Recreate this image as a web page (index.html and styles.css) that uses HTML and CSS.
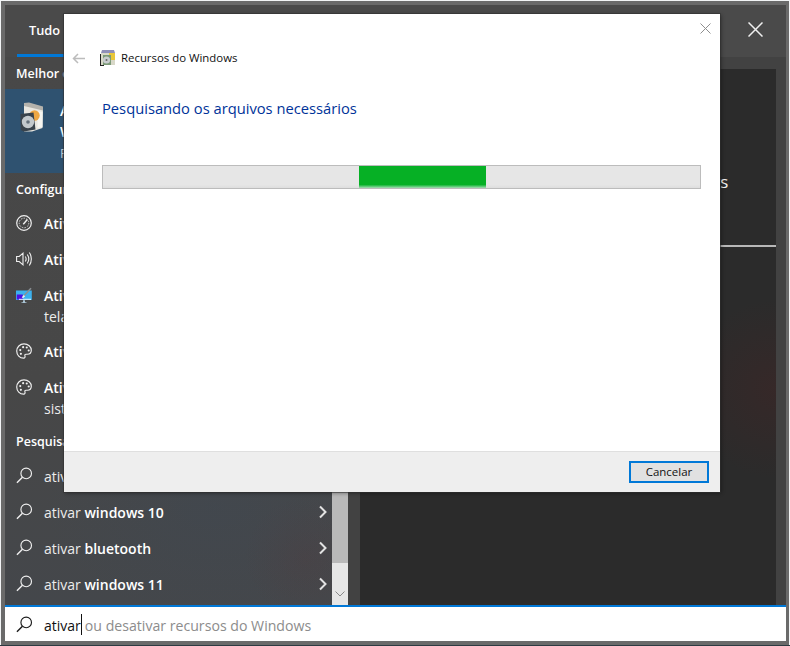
FILE: index.html
```html
<!DOCTYPE html>
<html lang="pt-BR">
<head>
<meta charset="utf-8">
<title>Recursos do Windows</title>
<link rel="stylesheet" href="styles.css">
</head>
<body>
<svg class="defs" width="0" height="0" aria-hidden="true">
  <symbol id="i-search" viewBox="0 0 18 18">
    <circle cx="10.8" cy="6.8" r="5.6" fill="none" stroke="currentColor" stroke-width="1.2"/>
    <path d="M6.8 10.8 1 16.6" fill="none" stroke="currentColor" stroke-width="1.5"/>
  </symbol>
  <symbol id="i-palette" viewBox="0 0 18 18">
    <path d="M9 1c4.600 0 8.200 3.100 8.200 7.200 0 2.800-2.100 4.500-4.500 4.500h-1.500c-1 0-1.500.6-1.200 1.500.4 1 .3 2.900-1.500 2.900C4.200 17.100.8 13.500.8 9.100.8 4.600 4.400 1 9 1Z" fill="none" stroke="currentColor" stroke-width="1.300"/>
    <circle cx="4.800" cy="8" r="1.200" fill="currentColor"/><circle cx="8" cy="4.700" r="1.200" fill="currentColor"/>
    <circle cx="12.100" cy="5" r="1.200" fill="currentColor"/><circle cx="14.300" cy="8.500" r="1.200" fill="currentColor"/>
    <circle cx="5.500" cy="12.200" r="1.200" fill="currentColor"/>
  </symbol>
  <symbol id="i-chev" viewBox="0 0 10 14">
    <path d="M2 1.500 7.500 7 2 12.500" fill="none" stroke="currentColor" stroke-width="2"/>
  </symbol>
  <symbol id="i-box" viewBox="0 0 24 30">
    <path d="M4 2 23 6.500 22.500 26 12 29.500H4Z" fill="#e9e7e0"/>
    <path d="M4 1 9 .6 23 4.500 23 8.500 4 4Z" fill="#b4b2ac"/>
    <path d="M17.500 26V9l5 1v15Z" fill="#f6f5f0"/>
    <circle cx="14.500" cy="13.500" r="5.200" fill="#eda743"/>
    <path d="M.5 12 13.500 10.500 15.500 27.500 4 29.500.8 28Z" fill="#39434b"/>
    <circle cx="8" cy="20" r="6.200" fill="#c3c9cc"/>
    <circle cx="8" cy="20" r="1.800" fill="#64707a"/>
  </symbol>
</svg>

<div class="frame">
  <div class="panel">
    <header class="topbar">
      <nav class="tabs">
        <span class="tab tab-active">Tudo</span>
        <span class="tab">Aplicativos</span>
        <span class="tab">Documentos</span>
        <span class="tab">Web</span>
        <span class="tab">Mais</span>
      </nav>
      <span class="dots">···</span>
      <svg class="top-close" viewBox="0 0 15 15"><path d="M.5.500l14 14M14.500.500l-14 14" fill="none" stroke="currentColor" stroke-width="1.500"/></svg>
    </header>

    <div class="main">
      <section class="results">
        <div class="list">
          <h2 class="group">Melhor correspondência</h2>
          <div class="best">
            <svg class="best-icon"><use href="#i-box"/></svg>
            <div class="best-text">
              <b>Ativar ou desativar recursos do</b>
              <b>Windows</b>
              <span class="best-sub">Painel de Controle</span>
            </div>
          </div>

          <h2 class="group">Configurações</h2>
          <div class="row">
            <svg class="ico" viewBox="0 0 16 16"><circle cx="8" cy="8" r="7.300" fill="none" stroke="currentColor" stroke-width="1.200"/><circle cx="8" cy="8" r="4.800" fill="none" stroke="currentColor" stroke-width=".8" stroke-dasharray="1.500 1.200"/><path d="M7.300 9.300 11.300 4.500" stroke="currentColor" stroke-width="1.400"/></svg>
            <div class="row-text"><b>Ativar ou desativar o modo de jogo</b></div>
          </div>
          <div class="row">
            <svg class="ico" viewBox="0 0 16 16"><path d="M.6 5.500h2.600L7 2.200v11.600L3.200 10.500H.6Z" fill="none" stroke="currentColor" stroke-width="1.100"/><path d="M9.300 5.500c1 1.500 1 3.500 0 5M11.300 3.500c1.800 2.700 1.800 6.300 0 9M13.300 1.500c2.700 3.800 2.700 9.200 0 13" fill="none" stroke="currentColor" stroke-width="1.100"/></svg>
            <div class="row-text"><b>Ativar ou desativar o som mono</b></div>
          </div>
          <div class="row row-tall">
            <svg class="ico" viewBox="0 0 16 16"><path d="M0 3.500h15.800v9.500H0Z" fill="#3cb1ee"/><path d="M.8 7.500h6v5h-6Z" fill="#4c10e2"/><path d="M3 11.800h12v1H3Z" fill="#e8f4fb"/><path d="M5.500 16h5v-.8H9v-2H7v2H5.500Z" fill="#a9c4d4"/><path d="M7 9.800 15 1.200" stroke="#8a8f94" stroke-width="1.600"/><path d="M5.700 10.500l2-2.500 1.500 1.300-2 1.700Z" fill="#f2f2f2"/></svg>
            <div class="row-text"><b>Ativar ou desativar o ajuste automático de</b><span>tela</span></div>
          </div>
          <div class="row">
            <svg class="ico"><use href="#i-palette"/></svg>
            <div class="row-text"><b>Ativar ou desativar as cores de destaque</b></div>
          </div>
          <div class="row row-tall">
            <svg class="ico"><use href="#i-palette"/></svg>
            <div class="row-text"><b>Ativar ou desativar o tema escuro do</b><span>sistema</span></div>
          </div>

          <h2 class="group">Pesquisar na Web</h2>
          <div class="row row-web">
            <svg class="ico"><use href="#i-search"/></svg>
            <div class="row-text web-text">ativar <b>windows</b></div>
            <svg class="chev"><use href="#i-chev"/></svg>
          </div>
          <div class="row row-web">
            <svg class="ico"><use href="#i-search"/></svg>
            <div class="row-text web-text">ativar <b>windows 10</b></div>
            <svg class="chev"><use href="#i-chev"/></svg>
          </div>
          <div class="row row-web">
            <svg class="ico"><use href="#i-search"/></svg>
            <div class="row-text web-text">ativar <b>bluetooth</b></div>
            <svg class="chev"><use href="#i-chev"/></svg>
          </div>
          <div class="row row-web">
            <svg class="ico"><use href="#i-search"/></svg>
            <div class="row-text web-text">ativar <b>windows 11</b></div>
            <svg class="chev"><use href="#i-chev"/></svg>
          </div>
        </div>
        <div class="scrollbar">
          <div class="thumb"></div>
          <svg class="scroll-down" viewBox="0 0 10 6"><path d="M.5.500 5 5 9.500.500" fill="none" stroke="currentColor" stroke-width="1"/></svg>
        </div>
      </section>

      <section class="detail">
        <h1 class="detail-title">Ativar ou desativar recursos do Windows</h1>
        <p class="detail-sub">Painel de Controle</p>
        <div class="detail-rule"></div>
      </section>
    </div>

    <div class="searchbox">
      <svg class="ico ico-dark"><use href="#i-search"/></svg>
      <div class="query"><span class="typed">ativar</span><span class="caret"></span><span class="hint">ou desativar recursos do Windows</span></div>
    </div>
  </div>
</div>

<div class="dialog">
  <svg class="dialog-close" viewBox="0 0 11 11"><path d="M.5.500l10 10M10.500.500l-10 10" fill="none" stroke="currentColor" stroke-width="1"/></svg>
  <div class="dialog-head">
    <svg class="back" viewBox="0 0 13 11"><path d="M13 5.500H1.500M6 1 1.500 5.500 6 10" fill="none" stroke="currentColor" stroke-width="1.500"/></svg>
    <svg class="dialog-icon" viewBox="0 0 16 16"><path d="M2 0h12l1 3H1Z" fill="#8f8fb8"/><path d="M1 3h14v12H1Z" fill="#d8d8c8"/><path d="M9 3h6v7H9Z" fill="#e8c63a"/><path d="M3 5h8v10H3Z" fill="#7c9a78"/><circle cx="6.500" cy="10" r="3.600" fill="#c9cdcf"/><circle cx="6.500" cy="10" r="1" fill="#666"/><path d="M0 4h1v12H0ZM0 15h4v1H0Z" fill="#222"/></svg>
    <span class="dialog-name">Recursos do Windows</span>
  </div>
  <div class="dialog-body">
    <h2 class="dialog-title">Pesquisando os arquivos necessários</h2>
    <div class="progress"><div class="progress-fill"></div></div>
  </div>
  <div class="dialog-foot">
    <button class="btn" type="button">Cancelar</button>
  </div>
</div>
</body>
</html>
```

FILE: styles.css
```css
* { box-sizing: border-box; }

html, body {
  margin: 0;
  padding: 0;
}

body {
  position: relative;
  width: 790px;
  height: 646px;
  overflow: hidden;
  background: #f2f4f5;
  border-bottom: 1px solid #2d3b42;
  font-family: "Open Sans", "Noto Sans", sans-serif;
}

.defs { position: absolute; }

.frame {
  height: 644px;
  margin: 1px 1px 0 1px;
  padding: 4px 3px 4px 4px;
  background: #6a6a6a;
}

.panel {
  height: 636px;
  display: flex;
  flex-direction: column;
  background: #424242;
  color: #fff;
  overflow: hidden;
}

.topbar {
  height: 52px;
  flex: none;
  display: flex;
  align-items: center;
  background: #4a4a4a;
  padding-right: 23px;
}

.tabs {
  display: flex;
  height: 100%;
  margin-left: 12px;
  flex: 1;
}

.tab {
  padding-top: 15px;
  margin-right: 20px;
  font-size: 12.800px;
  font-weight: 600;
  line-height: 20px;
  white-space: nowrap;
}

.tab-active {
  width: 47px;
  padding-left: 12px;
  border-bottom: 3px solid #0078d7;
}

.dots {
  font-size: 16px;
  color: #ddd;
  margin-right: 27px;
  margin-top: -4px;
  width: 14px;
}

.top-close {
  width: 15px;
  height: 15px;
  color: #f0f0f0;
  margin-top: -4px;
}

.main {
  flex: 1;
  min-height: 0;
  display: flex;
  background: #424242;
}

.results {
  width: 343px;
  flex: none;
  display: flex;
  background:
    radial-gradient(ellipse 170px 110px at 210px 450px, rgba(58, 72, 88, .3), transparent),
    radial-gradient(ellipse 60px 60px at 300px 500px, rgba(80, 60, 62, .35), transparent),
    linear-gradient(#484848, #474747 60%, #44474b);
}

.list {
  flex: 1;
  min-width: 0;
  overflow: hidden;
}

.group {
  height: 32px;
  margin: 0;
  padding-left: 11px;
  font-size: 12.500px;
  font-weight: 600;
  line-height: 34px;
  white-space: nowrap;
  color: #fff;
}

.best {
  height: 84px;
  display: flex;
  background: #2f5270;
}

.best-icon {
  width: 24px;
  height: 30px;
  margin: 13px 0 0 15px;
  flex: none;
}

.best-text {
  display: flex;
  flex-direction: column;
  margin-left: 16px;
  padding-top: 11px;
  font-size: 14px;
  line-height: 21px;
  white-space: nowrap;
}

.best-text b { font-weight: 600; }

.best-sub {
  margin-top: 1px;
  font-size: 12.500px;
  color: #c8d0d8;
}

.row {
  height: 36px;
  display: flex;
  align-items: flex-start;
  padding-left: 11px;
}

.row-tall { height: 56px; }

.ico {
  width: 16px;
  height: 16px;
  margin-top: 10px;
  flex: none;
  color: #f0f0f0;
}

.row-text {
  margin-left: 12px;
  display: flex;
  flex-direction: column;
  font-size: 14px;
  line-height: 21px;
  padding-top: 8px;
  white-space: nowrap;
  color: #ececec;
  min-width: 0;
}

.row-text b { font-weight: 600; color: #fff; }

.web-text {
  display: block;
  flex: 1;
  padding-top: 9px;
}

.row-web .ico { width: 17px; height: 17px; margin-top: 10px; }
.row-web .row-text { margin-left: 11px; }

.chev {
  width: 10px;
  height: 14px;
  margin: 12px 4px 0 0;
  flex: none;
  color: #e2e2e2;
}

.scrollbar {
  width: 16px;
  flex: none;
  display: flex;
  flex-direction: column;
  background: #e6e6e6;
}

.thumb {
  height: 506px;
  flex: none;
  background: #b9b9b9;
}

.scroll-down {
  width: 10px;
  height: 6px;
  margin: 28px auto 0;
  color: #8a8a8a;
}

.detail {
  flex: none;
  width: 416px;
  height: 536px;
  margin: 12px 0 0 12px;
  padding-top: 100px;
  background:
    radial-gradient(ellipse 90px 90px at 415px 320px, rgba(70, 36, 36, .4), transparent),
    #2b2b2b;
  overflow: hidden;
}

.detail-title {
  margin: 0;
  text-align: center;
  font-size: 16.900px;
  font-weight: 400;
  line-height: 26px;
  color: #f2f2f2;
  white-space: nowrap;
}

.detail-sub {
  margin: 4px 0 0;
  text-align: center;
  font-size: 12.500px;
  line-height: 18px;
  color: #ccc;
}

.detail-rule {
  height: 2px;
  margin-top: 28px;
  background: #b8b8b8;
}

.searchbox {
  height: 36px;
  flex: none;
  display: flex;
  align-items: flex-start;
  padding-left: 11px;
  background: #fff;
  border-top: 2px solid #0078d7;
}

.ico-dark {
  width: 17px;
  height: 17px;
  margin-top: 9px;
  color: #1a1a1a;
}

.query {
  display: flex;
  align-items: flex-start;
  margin-left: 11px;
  font-size: 14px;
  line-height: 21px;
  padding-top: 8px;
  white-space: nowrap;
}

.typed { color: #111; }

.caret {
  width: 1px;
  height: 21px;
  margin: -1px 3px 0 0;
  background: #111;
}

.hint {
  font-size: 14.130px;
  color: #8c8c8c;
}

.dialog {
  position: absolute;
  left: 64px;
  top: 14px;
  width: 656px;
  height: 478px;
  display: flex;
  flex-direction: column;
  background: #fff;
  box-shadow: 0 0 0 1px rgba(50, 50, 50, .55), 1px 1px 4px rgba(0, 0, 0, .45);
  color: #000;
}

.dialog-close {
  position: absolute;
  right: 9px;
  top: 9px;
  width: 11px;
  height: 11px;
  color: #8e8e8e;
}

.dialog-head {
  height: 52px;
  flex: none;
  display: flex;
  align-items: center;
  padding-top: 36px;
}

.back {
  width: 13px;
  height: 11px;
  margin-left: 8px;
  color: #bcbcbc;
}

.dialog-icon {
  width: 16px;
  height: 16px;
  margin-left: 15px;
}

.dialog-name {
  margin-left: 5px;
  font-size: 11.400px;
  line-height: 16px;
  color: #111;
}

.dialog-body {
  flex: 1;
  padding: 31px 19px 0 38px;
}

.dialog-title {
  margin: 0;
  font-size: 14.730px;
  font-weight: 400;
  line-height: 22px;
  color: #003399;
}

.progress {
  height: 24px;
  margin-top: 46px;
  border: 1px solid #bcbcbc;
  background: linear-gradient(#e6e6e6 85%, #dedede);
  padding-left: 256px;
}

.progress-fill {
  width: 127px;
  height: 100%;
  background: linear-gradient(#06b025 84%, #3ac058 90%, #a6dcb4);
}

.dialog-foot {
  height: 41px;
  flex: none;
  display: flex;
  justify-content: flex-end;
  padding: 9px 11px 0 0;
  background: #eeeeee;
  border-top: 1px solid #dfdfdf;
}

.btn {
  width: 80px;
  height: 22px;
  padding: 0;
  border: 2px solid #0078d7;
  background: #e1e1e1;
  font-family: inherit;
  font-size: 11.500px;
  line-height: 16px;
  color: #111;
}
```
